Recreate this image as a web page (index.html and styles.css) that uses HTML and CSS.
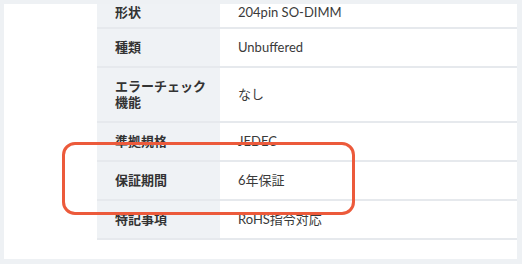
FILE: index.html
```html
<!DOCTYPE html>
<html lang="ja">
<head>
<meta charset="utf-8">
<title>仕様</title>
<link rel="stylesheet" href="styles.css">
</head>
<body>
<div class="panel">
  <table class="spec">
    <tr class="first"><th>形状</th><td>204pin SO-DIMM</td></tr>
    <tr><th>種類</th><td>Unbuffered</td></tr>
    <tr><th>エラーチェック<br>機能</th><td>なし</td></tr>
    <tr><th>準拠規格</th><td>JEDEC</td></tr>
    <tr><th>保証期間</th><td>6年保証</td></tr>
    <tr><th>特記事項</th><td>RoHS指令対応</td></tr>
  </table>
  <div class="mark"></div>
</div>
</body>
</html>
```

FILE: styles.css
```css
html, body { margin: 0; padding: 0; }
body {
  background: #eef1f4;
  width: 522px;
  height: 264px;
  overflow: hidden;
  font-family: Lato, "Noto Sans CJK JP", sans-serif;
  color: #333;
}
.panel {
  position: relative;
  margin: 4px 5px 0 4px;
  height: 255px;
  background: #fff;
  overflow: hidden;
  padding-left: 93px;
}
.spec {
  border-collapse: collapse;
  width: 100%;
  margin-top: -11px;
  font-size: 13px;
  line-height: 16px;
}
.spec tr { border-bottom: 2px solid #e6e9ed; }
.spec th {
  box-sizing: border-box;
  width: 123px;
  background: #eff2f5;
  font-weight: 700;
  text-align: left;
  white-space: nowrap;
  padding: 10.5px 4px 10.5px 18px;
  font-family: "Noto Sans CJK JP", sans-serif;
}
.spec td { padding: 10.5px 18px; color: #3a3a3a; }
.spec .first th, .spec .first td { padding-bottom: 7px; }
/* highlight ring */
.mark {
  position: absolute;
  left: 58px;
  top: 138px;
  width: 287px;
  height: 67px;
  border: 3px solid #ec5a3b;
  border-radius: 13px;
}
```
